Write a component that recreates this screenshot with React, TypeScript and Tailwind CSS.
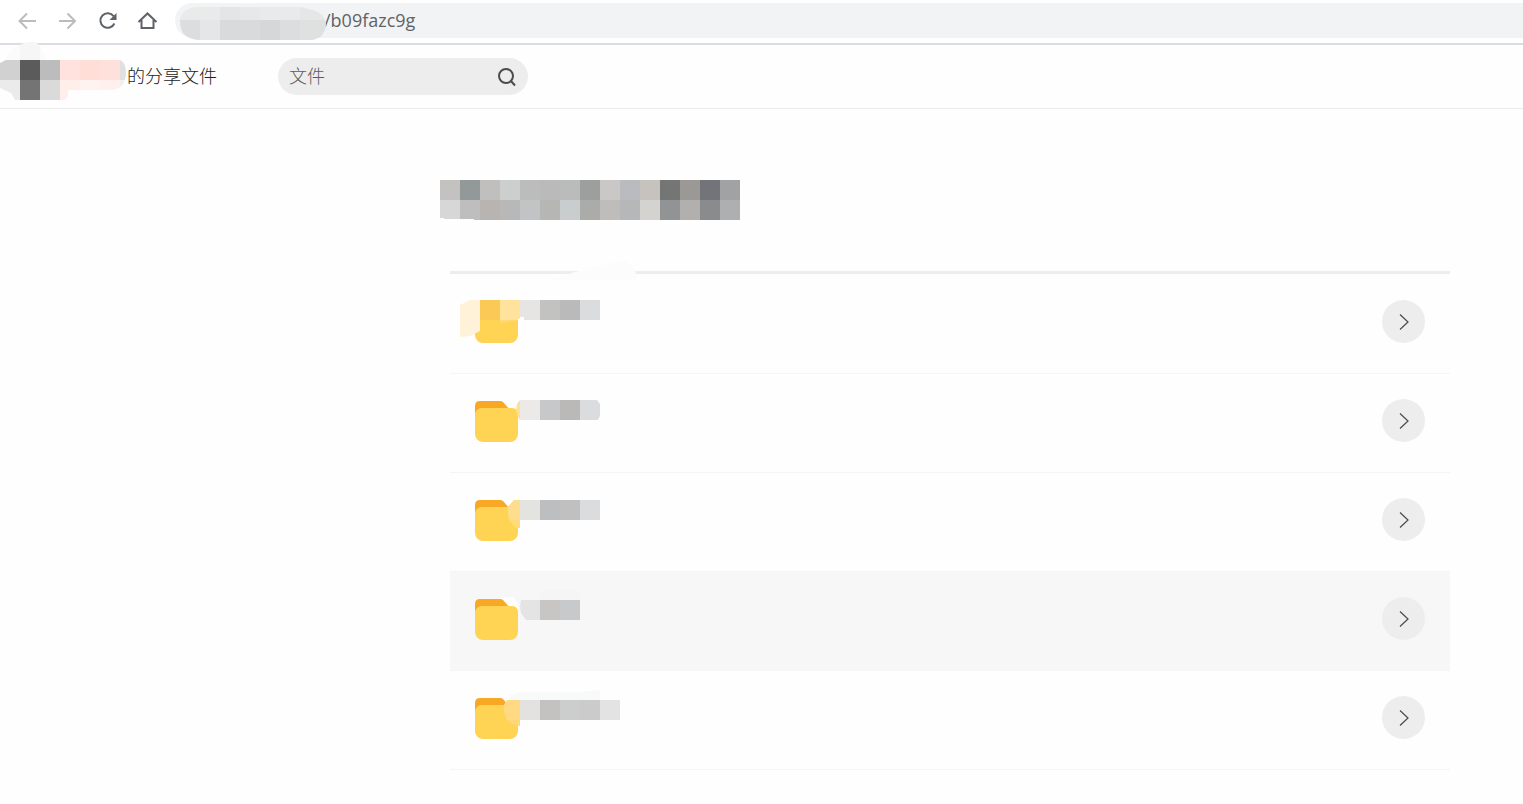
import type { ReactNode } from 'react';

type Tile = [x: number, y: number, w: number, h: number, fill: string];

function Tiles({ tiles }: { tiles: Tile[] }) {
  return (
    <g shapeRendering="crispEdges">
      {tiles.map(([x, y, w, h, fill], i) => (
        <rect key={i} x={x} y={y} width={w} height={h} fill={fill} />
      ))}
    </g>
  );
}

function NavIcon({ label, children, muted }: { label: string; children: ReactNode; muted?: boolean }) {
  return (
    <button type="button" aria-label={label} className={muted ? 'text-[#babcbe]' : 'text-[#5f6368]'}>
      <svg width="24" height="24" viewBox="0 0 24 24" fill="none" stroke="currentColor" strokeWidth="2">
        {children}
      </svg>
    </button>
  );
}

function AddressMask() {
  return (
    <svg aria-hidden="true" width="151" height="38" viewBox="0 0 151 38" className="absolute left-0 top-0">
      <defs>
        <clipPath id="address-shape">
          <path d="M5 37V16Q9 4 24 4H125L138 7Q151 11 151 23Q149 35 138 37H28Q5 38 5 18Z" />
        </clipPath>
      </defs>
      <g clipPath="url(#address-shape)">
        <Tiles
          tiles={[
            [5, 4, 20, 13, '#e9ebea'], [25, 4, 20, 13, '#e9ebea'], [45, 4, 20, 13, '#e4e5e7'],
            [65, 4, 20, 13, '#e6e8e9'], [85, 4, 40, 13, '#e9eaec'], [125, 4, 26, 13, '#e4e7e6'],
            [5, 17, 20, 20, '#dcdddf'], [25, 17, 20, 20, '#e5e6e7'], [45, 17, 40, 20, '#d9dadc'],
            [85, 17, 20, 20, '#d6d7d9'], [105, 17, 20, 20, '#dcdddf'], [125, 17, 26, 20, '#dfe1e0'],
          ]}
        />
      </g>
    </svg>
  );
}

function OwnerMask() {
  return (
    <svg aria-hidden="true" width="126" height="60" viewBox="0 0 126 60" className="absolute -top-[3px] left-0">
      <path d="M5 18Q12 6 20 3L27 0H33Q40 2 42 7L46 18Z" fill="#fbfbfb" />
      <path d="M20 18V3L27 0H33Q38 1 40 5V18Z" fill="#f6f6f6" />
      <defs>
        <clipPath id="owner-shape">
          <path d="M0 21L6 18H120Q126 20 126 32Q125 46 113 48H68V54L65 58H15L11 51L0 46Z" />
        </clipPath>
      </defs>
      <g clipPath="url(#owner-shape)">
        <Tiles
          tiles={[
            [0, 18, 20, 20, '#d1d1d1'], [20, 18, 20, 20, '#5b5b5b'], [40, 18, 20, 20, '#bcbcbc'],
            [60, 18, 20, 20, '#ffe2dd'], [80, 18, 20, 20, '#ffded7'], [100, 18, 20, 20, '#ffe1db'],
            [120, 18, 6, 20, '#e0e0e0'], [0, 38, 20, 20, '#ebebeb'], [20, 38, 20, 20, '#747474'],
            [40, 38, 20, 20, '#dadada'], [60, 38, 20, 20, '#ffeeea'], [80, 38, 20, 20, '#fff3f0'],
            [100, 38, 20, 20, '#fff0ed'], [120, 38, 6, 20, '#f0f0f0'],
          ]}
        />
      </g>
    </svg>
  );
}

const titleColors = [
  ['#c3c2c0', '#939899', '#c1bfbd', '#cdcfce', '#bcbcbc', '#bababa', '#b9bcbb', '#9d9f9e', '#c9c8c7', '#b9bbbe', '#c6c2bd', '#747675', '#9b9895', '#737479', '#a1a2a4'],
  ['#d7d7d7', '#bebebe', '#b7b4b2', '#b8b8b8', '#c2c3c5', '#b6b6b4', '#c9cdce', '#ababa9', '#bfbdbb', '#b5b7b9', '#d4d3cf', '#929395', '#b2b0af', '#8a8b8d', '#aeafb1'],
];

function TitleMask() {
  return (
    <svg role="img" aria-label="标题" width="300" height="40" viewBox="0 0 300 40">
      <Tiles tiles={titleColors.flatMap((row, y) => row.map((fill, x): Tile => [x * 20, y * 20, 20, 20, fill]))} />
      <path d="M0 38H4V39H34V40H0Z" fill="#fefefe" />
    </svg>
  );
}

function Folder() {
  return (
    <g>
      <path d="M25 42V32Q25 27 30 27H50Q52 27 53 28L60 36V44Z" fill="#f9a825" />
      <rect x="25" y="34" width="43" height="34" rx="8" fill="#ffd454" />
      <path d="M25 42Q25 34 33 34H62Q68 34 68 41V50H25Z" fill="#ffd454" />
    </g>
  );
}

interface Item {
  id: number;
  active?: boolean;
  under?: ReactNode;
  over: ReactNode;
}

const items: Item[] = [
  {
    id: 1,
    over: (
      <>
        <path d="M25 20H70V42H25Z" fill="#fefefe" />
        <path d="M10 30L20 25H30V56L20 61L10 62Z" fill="#fff2d9" />
        <path d="M30 45H70L68 46V50H30Z" fill="#ffd454" />
        <Tiles tiles={[[30, 25, 20, 20, '#fbc955'], [50, 25, 20, 20, '#ffe29b'], [70, 25, 20, 17, '#e6e5e4'], [74, 42, 16, 3, '#e6e5e4'], [90, 25, 20, 20, '#c2c2c0'], [110, 25, 20, 20, '#bababa'], [130, 25, 20, 20, '#dbdcde']]} />
        <path d="M50 45H68L50 48Z" fill="#ffd973" />
        <path d="M68 44L74 42V46H68Z" fill="#fefefe" />
      </>
    ),
  },
  {
    id: 2,
    over: (
      <>
        <path d="M70 26L67 30L66 36L68 43L70 46Z" fill="#ffdf94" />
        <Tiles tiles={[[70, 26, 20, 20, '#ebeae9'], [90, 26, 20, 20, '#c7c8ca'], [110, 26, 20, 20, '#bbb9b7']]} />
        <path d="M130 26H147L150 30V42L148 46H130Z" fill="#dbdcde" />
      </>
    ),
  },
  {
    id: 3,
    over: (
      <>
        <path d="M70 27H64L58 34V42L60 48L66 55H70Z" fill="#ffdc75" />
        <path d="M70 27H64L58 34V42L60 47H70Z" fill="#ffdd8e" />
        <Tiles tiles={[[70, 27, 20, 20, '#e3e4df'], [90, 27, 20, 20, '#bdbec0'], [110, 27, 20, 20, '#c0c0c0'], [130, 27, 20, 20, '#dbdcde']]} />
      </>
    ),
  },
  {
    id: 4,
    active: true,
    under: <path d="M50 26Q57 24 64 26Q68 29 68 38L58 36Z" fill="#fefefe" />,
    over: (
      <>
        <Tiles tiles={[[90, 19, 40, 9, '#f5f5f5'], [90, 28, 20, 20, '#c8c6c4'], [110, 28, 20, 20, '#c8c9cb']]} />
        <path d="M71 28H90V48H76L71 41L70 34Z" fill="#e4e4e4" />
      </>
    ),
  },
  {
    id: 5,
    over: (
      <>
        <path d="M58 29L64 23L72 21H130L150 19V29Z" fill="#f8f9f9" />
        <path d="M70 29H57L54 34V40L57 49L64 54L70 55Z" fill="#ffd976" />
        <path d="M70 29H57L54 34V40L57 49H70Z" fill="#ffda82" />
        <Tiles tiles={[[70, 29, 20, 20, '#e3e2e1'], [90, 29, 20, 20, '#c4c2c0'], [110, 29, 20, 20, '#cbcecd'], [130, 29, 20, 20, '#cbcbcb'], [150, 29, 20, 20, '#e3e3e3']]} />
      </>
    ),
  },
];

function FolderRow({ item }: { item: Item }) {
  return (
    <li
      className={`flex h-[99px] items-start justify-between border-b border-[#f5f5f5] pr-[25px] ${item.active ? 'bg-[#f7f7f7]' : ''}`}
    >
      <svg role="img" aria-label="文件夹" width="180" height="98" viewBox="0 0 180 98">
        {item.under}
        <Folder />
        {item.over}
      </svg>
      <button
        type="button"
        aria-label="打开"
        className="mt-[25px] flex size-[43px] items-center justify-center rounded-full bg-[#ededed]"
      >
        <svg width="43" height="43" viewBox="0 0 43 43" fill="none" stroke="#4a4a4a" strokeWidth="1.2">
          <path d="M18 14.5L26 22L18 29.5" />
        </svg>
      </button>
    </li>
  );
}

export default function App() {
  return (
    <div className="min-h-screen bg-[#fefefe] font-['Noto_Sans','Noto_Sans_CJK_SC',sans-serif] text-lg">
      <nav className="flex h-[45px] items-start border-b-2 border-[#dcdde2] bg-white pl-[15px] pt-[3px]">
        <div className="flex gap-4 pt-[6px]">
          <NavIcon label="后退" muted>
            <path d="M21 12H5M12 4.5L4.5 12L12 19.5" />
          </NavIcon>
          <NavIcon label="前进" muted>
            <path d="M4 12H20M12.5 4.5L20 12L12.5 19.5" />
          </NavIcon>
          <NavIcon label="重新加载">
            <path d="M18.6 7.2A7.3 7.3 0 1 0 19.4 14.5" />
            <path d="M21.5 4V11H14.5Z" fill="currentColor" stroke="none" />
          </NavIcon>
          <NavIcon label="主页">
            <path d="M3.5 13L12.5 4.5L21.5 13M6.5 11V19H18.5V11" />
          </NavIcon>
        </div>
        <div className="relative ml-4 h-[35px] min-w-0 flex-1 rounded-l-full bg-[#f1f3f4]">
          <input
            aria-label="地址"
            defaultValue="/b09fazc9g"
            className="h-[33px] w-full bg-transparent pl-[149px] font-['Open_Sans',sans-serif] text-[#5f6368] outline-none"
          />
          <AddressMask />
        </div>
      </nav>

      <header className="relative flex h-16 items-center border-b border-[#ececec] pl-[127px]">
        <OwnerMask />
        <h1 className="pb-[3px] font-['Noto_Sans_CJK_SC',sans-serif] font-light text-[#222222]">的分享文件</h1>
        <form
          role="search"
          onSubmit={(e) => e.preventDefault()}
          className="ml-[61px] flex h-[37px] w-[250px] items-center rounded-full bg-[#ededed] pl-[11px] pr-[9px]"
        >
          <input
            type="text"
            aria-label="搜索文件"
            placeholder="文件"
            className="min-w-0 flex-1 bg-transparent pb-1 font-['Noto_Sans_CJK_SC',sans-serif] font-light outline-none placeholder:text-[#5c5c5c]"
          />
          <button type="submit" aria-label="搜索">
            <svg width="24" height="24" viewBox="0 0 24 24" fill="none" stroke="#4c4c4c" strokeWidth="2">
              <circle cx="11" cy="11" r="7" />
              <path d="M15.5 15.5L20 20.5" />
            </svg>
          </button>
        </form>
      </header>

      <main className="pl-[440px] pr-[73px] pt-[71px]">
        <div className="flex">
          <TitleMask />
        </div>
        <ul className="relative ml-[10px] mt-[51px] border-t-[3px] border-[#ededed] pt-px">
          <svg aria-hidden="true" width="90" height="22" viewBox="0 0 90 22" className="absolute -top-4 left-[100px]">
            <path d="M0 22L25 14L70 3Q78 2 82 8Q86 12 87 22Z" fill="#fcfcfc" />
          </svg>
          {items.map((item) => (
            <FolderRow key={item.id} item={item} />
          ))}
        </ul>
      </main>
    </div>
  );
}
